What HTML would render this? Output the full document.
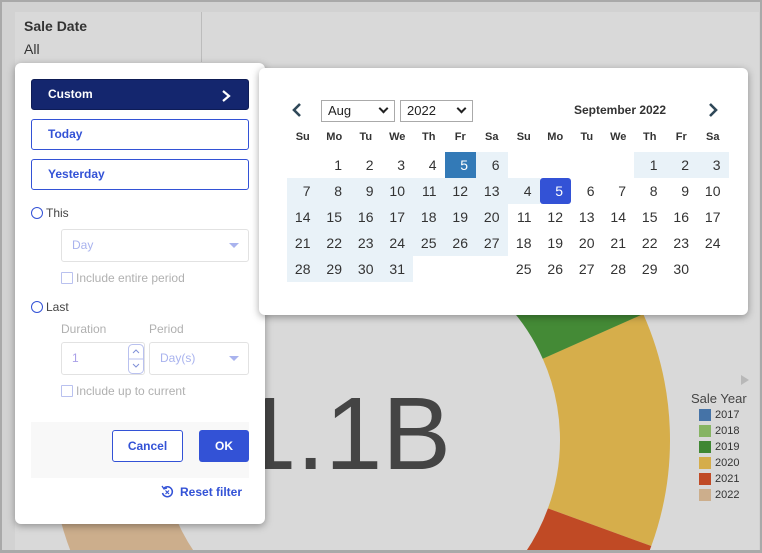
<!DOCTYPE html>
<html><head><meta charset="utf-8">
<style>
*{box-sizing:border-box;margin:0;padding:0}
html,body{width:762px;height:553px;overflow:hidden}
body{background:#d2d2d2;font-family:"Liberation Sans",sans-serif;position:relative}
.abs{position:absolute}
#frame{left:0;top:0;width:762px;height:553px;border:2px solid #a9a9a9;border-bottom-width:3px}
#panel{left:15px;top:12px;width:744px;height:538px;background:#d9d9d9}
.pop{background:#fff;border-radius:6px;box-shadow:0 2px 8px rgba(0,0,0,.35)}
.btn{position:absolute;left:31px;width:218px;height:31px;border-radius:3px;font-size:12px;font-weight:bold;line-height:29px;padding-left:16px}
.ob{border:1px solid #3352d6;color:#3352d6}
.radio{position:absolute;width:12px;height:12px;border:1.5px solid #3352d6;border-radius:50%}
.lbl{position:absolute;font-size:12px;color:#444}
.sel{position:absolute;border:1px solid #e2e2e2;border-radius:3px;background:#fff;font-size:12px;color:#a9b3ee;padding-left:10px}
.caret{position:absolute;right:9px;width:0;height:0;border-left:5px solid transparent;border-right:5px solid transparent;border-top:5px solid #a9b3ee}
.cb{position:absolute;width:12px;height:12px;border:1px solid #b9c1ef;border-radius:1px}
.grey{position:absolute;font-size:12px;color:#b0b0b0}
.grid{position:absolute;display:grid;grid-template-columns:repeat(7,31.5px);grid-auto-rows:26px}
.grid span{font-size:14px;color:#333;text-align:right;padding-right:8px;line-height:26px}
.grid .h{font-size:11px;font-weight:bold;text-align:center;padding:0;line-height:18px;color:#333}
.grid .b{background:#e9f2f8}
.grid .s1{background:#337ab7;color:#fff}
.grid .s2{background:#3352d6;color:#fff;border-radius:3px}
.dd{position:absolute;top:100px;height:22px;border:1px solid #aaa;font-size:13px;color:#222;padding-left:6px;line-height:20px;background:#fff}
.dd i{position:absolute;right:7px;top:4px;width:7px;height:7px;border-right:2px solid #222;border-bottom:2px solid #222;transform:rotate(45deg)}
.lg{position:absolute;left:699px;width:12px;height:12px}
.lt{position:absolute;left:715px;font-size:11px;color:#333}
</style></head><body>
<div id="panel" class="abs"></div>
<div class="abs" style="left:201px;top:12px;width:1px;height:50px;background:#bcbcbc"></div>
<div class="abs" style="left:24px;top:18px;font-size:14px;font-weight:bold;color:#333">Sale Date</div>
<div class="abs" style="left:24px;top:41px;font-size:14px;color:#333">All</div>

<svg class="abs" style="left:0;top:0" width="762" height="553">
<g transform="translate(360 440)" fill="none" stroke-width="110">
<circle r="255" stroke="#d6ae4b" stroke-dasharray="195.8 2000" transform="rotate(-24)"/>
<circle r="255" stroke="#c04a25" stroke-dasharray="356 2000" transform="rotate(20)"/>
<circle r="255" stroke="#ccae8c" stroke-dasharray="667.6 2000" transform="rotate(100)"/>
<circle r="255" stroke="#448a36" stroke-dasharray="382.8 2000" transform="rotate(250)"/>
</g>
<text x="451" y="469" text-anchor="end" font-family="Liberation Sans" font-size="103" fill="#444">1.1B</text>
<polygon points="741,375 749,380 741,385" fill="#b8b8b8"/>
</svg>
<div class="abs" style="left:691px;top:391px;font-size:13px;color:#444">Sale Year</div>
<div class="lg" style="top:409px;background:#4573a7"></div><div class="lt" style="top:409px">2017</div>
<div class="lg" style="top:425px;background:#86b463"></div><div class="lt" style="top:425px">2018</div>
<div class="lg" style="top:441px;background:#3f8733"></div><div class="lt" style="top:441px">2019</div>
<div class="lg" style="top:457px;background:#d5ad4a"></div><div class="lt" style="top:457px">2020</div>
<div class="lg" style="top:473px;background:#c04a25"></div><div class="lt" style="top:473px">2021</div>
<div class="lg" style="top:489px;background:#ccae8c"></div><div class="lt" style="top:489px">2022</div>

<div id="frame" class="abs"></div>

<!-- left popup -->
<div class="abs pop" style="left:15px;top:63px;width:250px;height:461px"></div>
<div class="btn" style="top:79px;background:#14266e;color:#fff;border:1px solid #0e1c55">Custom
<svg class="abs" style="left:188px;top:9px" width="12" height="14"><path d="M3 2 L9 7 L3 12" stroke="#fff" stroke-width="2.2" fill="none"/></svg></div>
<div class="btn ob" style="top:119px">Today</div>
<div class="btn ob" style="top:159px">Yesterday</div>
<div class="radio" style="left:31px;top:207px"></div><div class="lbl" style="left:46px;top:206px">This</div>
<div class="sel" style="left:61px;top:229px;width:188px;height:33px;line-height:31px">Day<div class="caret" style="top:13px"></div></div>
<div class="cb" style="left:61px;top:272px"></div><div class="grey" style="left:76px;top:271px">Include entire period</div>
<div class="radio" style="left:31px;top:301px"></div><div class="lbl" style="left:46px;top:300px">Last</div>
<div class="grey" style="left:61px;top:322px">Duration</div><div class="grey" style="left:149px;top:322px">Period</div>
<div class="sel" style="left:61px;top:342px;width:84px;height:33px;line-height:31px;color:#a9a0e8">1
<svg class="abs" style="left:66px;top:1px" width="16" height="30"><rect x="0.5" y="0.5" width="15" height="29" rx="4" fill="#fff" stroke="#b9c1ef"/><line x1="0" y1="15" x2="16" y2="15" stroke="#b9c1ef"/><path d="M5 9 L8 6 L11 9" stroke="#8090d8" fill="none"/><path d="M5 20 L8 23 L11 20" stroke="#8090d8" fill="none"/></svg></div>
<div class="sel" style="left:149px;top:342px;width:100px;height:33px;line-height:31px">Day(s)<div class="caret" style="top:13px"></div></div>
<div class="cb" style="left:61px;top:385px"></div><div class="grey" style="left:76px;top:384px">Include up to current</div>
<div class="abs" style="left:31px;top:422px;width:218px;height:56px;background:#f8f8f8"></div>
<div class="abs ob" style="left:112px;top:430px;width:71px;height:32px;border-radius:3px;font-size:12px;font-weight:bold;text-align:center;line-height:30px;background:#fff">Cancel</div>
<div class="abs" style="left:199px;top:430px;width:50px;height:32px;border-radius:3px;background:#3352d6;color:#fff;font-size:12px;font-weight:bold;text-align:center;line-height:32px">OK</div>
<svg class="abs" style="left:160px;top:485px" width="14" height="14"><path d="M4 3 A5 5 0 1 1 2.5 8" stroke="#3352d6" stroke-width="1.5" fill="none"/><path d="M2 1 L4 4 L7 3" stroke="#3352d6" stroke-width="1.3" fill="none"/><path d="M5.5 5.5 L9 9 M9 5.5 L5.5 9" stroke="#3352d6" stroke-width="1.2"/></svg>
<div class="abs" style="left:180px;top:485px;font-size:12px;font-weight:bold;color:#3352d6">Reset filter</div>

<!-- calendar -->
<div class="abs pop" style="left:259px;top:68px;width:489px;height:247px"></div>
<svg class="abs" style="left:290px;top:102px" width="14" height="16"><path d="M10 2 L4 8 L10 14" stroke="#2f4858" stroke-width="2.6" fill="none"/></svg>
<svg class="abs" style="left:706px;top:102px" width="14" height="16"><path d="M4 2 L10 8 L4 14" stroke="#2f4858" stroke-width="2.6" fill="none"/></svg>
<div class="dd" style="left:321px;width:74px">Aug<i></i></div>
<div class="dd" style="left:400px;width:73px">2022<i></i></div>
<div class="abs" style="left:560px;top:103px;width:120px;text-align:center;font-size:12px;font-weight:bold;color:#333">September 2022</div>

<div class="grid" style="left:287px;top:128px;grid-template-rows:24px">
<span class="h">Su</span><span class="h">Mo</span><span class="h">Tu</span><span class="h">We</span><span class="h">Th</span><span class="h">Fr</span><span class="h">Sa</span>
<span></span><span>1</span><span>2</span><span>3</span><span>4</span><span class="s1">5</span><span class="b">6</span>
<span class="b">7</span><span class="b">8</span><span class="b">9</span><span class="b">10</span><span class="b">11</span><span class="b">12</span><span class="b">13</span>
<span class="b">14</span><span class="b">15</span><span class="b">16</span><span class="b">17</span><span class="b">18</span><span class="b">19</span><span class="b">20</span>
<span class="b">21</span><span class="b">22</span><span class="b">23</span><span class="b">24</span><span class="b">25</span><span class="b">26</span><span class="b">27</span>
<span class="b">28</span><span class="b">29</span><span class="b">30</span><span class="b">31</span>
</div>
<div class="grid" style="left:508px;top:128px;grid-template-rows:24px">
<span class="h">Su</span><span class="h">Mo</span><span class="h">Tu</span><span class="h">We</span><span class="h">Th</span><span class="h">Fr</span><span class="h">Sa</span>
<span></span><span></span><span></span><span></span><span class="b">1</span><span class="b">2</span><span class="b">3</span>
<span class="b">4</span><span class="s2">5</span><span>6</span><span>7</span><span>8</span><span>9</span><span>10</span>
<span>11</span><span>12</span><span>13</span><span>14</span><span>15</span><span>16</span><span>17</span>
<span>18</span><span>19</span><span>20</span><span>21</span><span>22</span><span>23</span><span>24</span>
<span>25</span><span>26</span><span>27</span><span>28</span><span>29</span><span>30</span>
</div>
</body></html>
